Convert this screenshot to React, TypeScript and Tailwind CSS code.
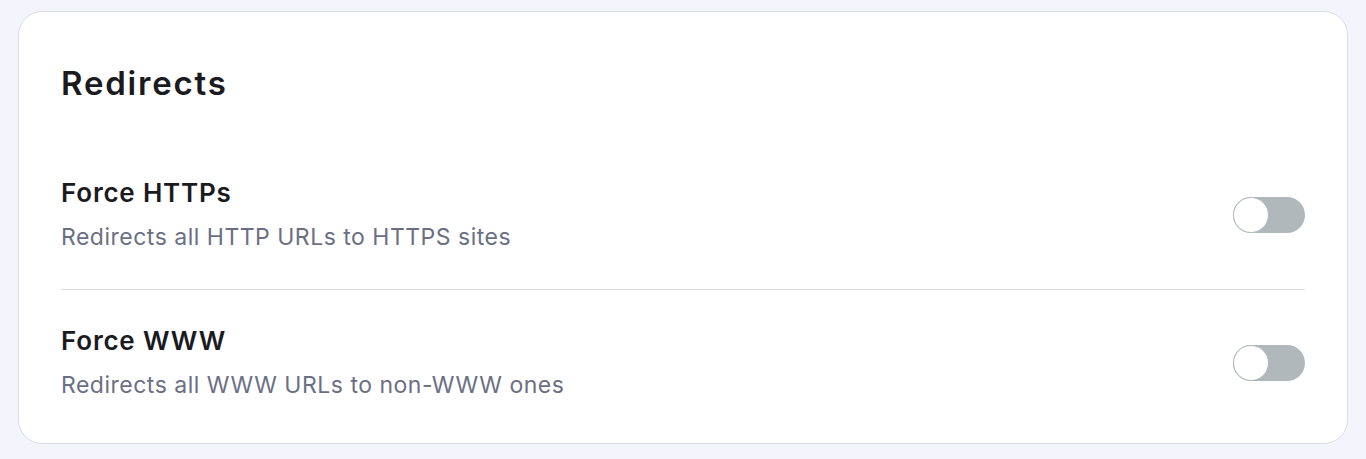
import React, { useState } from "react";

interface RowProps {
	title: string;
	description: string;
}

function Toggle() {
	const [on, setOn] = useState(false);
	return (
		<button
			onClick={() => setOn(!on)}
			className={`relative h-9 w-[72px] shrink-0 rounded-full ${on ? "bg-indigo-500" : "bg-[#b1b8bb]"}`}
		>
			<span
				className={`absolute top-0 h-9 w-9 rounded-full border-[1.5px] border-[#b1b8bb] bg-white ${on ? "left-9" : "left-0"}`}
			/>
		</button>
	);
}

function SettingRow({ title, description }: RowProps) {
	return (
		<div className="flex flex-row items-center justify-between">
			<div className="flex flex-col">
				<h3 className="text-[26px] font-semibold leading-8 tracking-[0.8px] text-[#1b1b1f]">{title}</h3>
				<p className="mt-[13px] text-[23px] leading-[30px] tracking-[0.5px] text-[#6b6f84]">{description}</p>
			</div>
			<Toggle />
		</div>
	);
}

export default function App() {
	return (
		<div className="min-h-screen bg-[#f4f4fd] px-[18px] pt-[11px] pb-4" style={{ fontFamily: "Inter, 'Noto Sans', sans-serif" }}>
			<div className="rounded-[24px] border border-[#dcdce4] bg-white px-[42px] pt-[51px] pb-[43px]">
				<h2 className="text-[33px] font-semibold leading-10 tracking-[1.8px] text-[#1b1b1f]">Redirects</h2>
				<div className="mt-[74px]">
					<SettingRow title="Force HTTPs" description="Redirects all HTTP URLs to HTTPS sites" />
				</div>
				<div className="mt-[37px] mb-[35px] h-px bg-[#dedee2]" />
				<SettingRow title="Force WWW" description="Redirects all WWW URLs to non-WWW ones" />
			</div>
		</div>
	);
}
